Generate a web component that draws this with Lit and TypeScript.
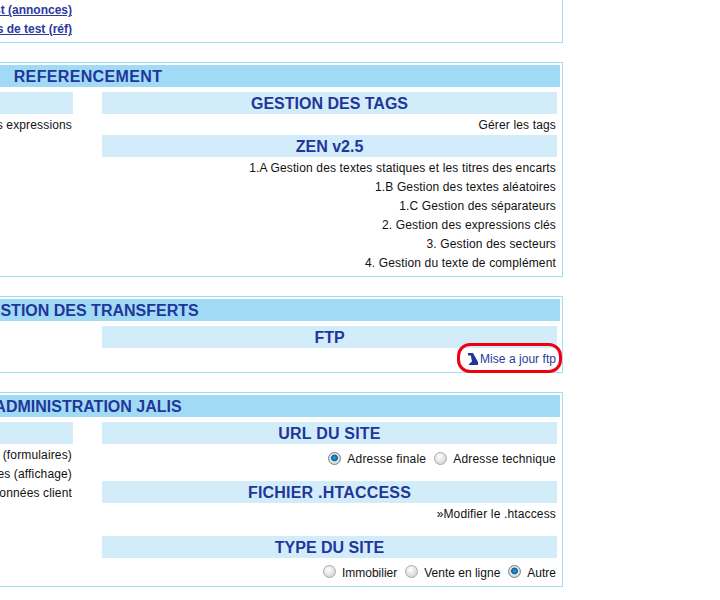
import { LitElement, html, css } from "lit";
import { customElement } from "lit/decorators.js";

@customElement("app-root")
export class AppRoot extends LitElement {
  static styles = css`
    :host { display: block; width: 720px; height: 600px; overflow: hidden; background: #fff; font-family: "Liberation Sans", Arial, sans-serif; font-size: 12px; color: #111; letter-spacing: 0.15px; }
    .page { width: 950px; margin-left: -387px; display: flex; flex-direction: column; gap: 19px; }
    .panel { border: 1px solid #a0dff0; padding: 2px 2px 3px; }
    .panel.first { border-top: none; padding: 0 2px 2px; }
    .bar { height: 22px; line-height: 24px; background: #a1daf5; color: #22369a; font-size: 16px; font-weight: bold; text-align: center; margin-bottom: 5px; letter-spacing: 0; }
    .bar.wide { letter-spacing: 0.35px; }
    .cols { display: grid; grid-template-columns: 454px 455px; column-gap: 29px; padding: 0 0 0 3px; }
    .col { display: flex; flex-direction: column; }
    .sub { height: 22px; line-height: 24px; background: #d3ecfa; color: #22369a; font-size: 16px; font-weight: bold; text-align: center; letter-spacing: 0; }
    .sub.wide { letter-spacing: 0.2px; }
    .sub.later { margin-top: 12px; }
    .rows { margin: 1px 0; }
    .row { height: 19px; line-height: 21px; text-align: right; padding-right: 1px; white-space: nowrap; }
    .row.link { font-weight: bold; color: #2b3a9b; text-decoration: underline; letter-spacing: 0; line-height: 19px; }
    .row.blue { color: #2b3a9b; display: flex; justify-content: flex-end; align-items: center; gap: 2px; box-sizing: border-box; padding-top: 2px; letter-spacing: 0.04px; }
    .radios { height: 37px; box-sizing: border-box; padding: 0 1px 7px 0; display: flex; justify-content: flex-end; align-items: center; gap: 8px; letter-spacing: 0.2px; }
    .radios.last { height: 25px; padding: 4px 1px 0 0; letter-spacing: 0; }
    .opt { display: flex; align-items: center; gap: 6px; }
    .r { width: 13px; height: 13px; border-radius: 50%; box-sizing: border-box; border: 1px solid #a9a9a9; background: radial-gradient(circle at 40% 35%, #fff, #cfcfcf 90%); margin-top: -2px; }
    .r.on { border-color: #76828e; background: radial-gradient(circle at 50% 45%, #38a6dc 0, #0a5f98 3px, #e6e6e6 3.8px, #c6c6c6); }
    .callout { position: absolute; left: 457px; top: 343px; width: 105px; height: 30px; box-sizing: border-box; border: 3px solid #ee0010; border-radius: 13px; pointer-events: none; }
    .wrap { position: relative; }
    .ico { display: block; margin-bottom: 2px; }
  `;

  private rows(items: string[], cls = "") {
    return html`<div class="rows">${items.map((t) => html`<div class="row ${cls}">${t}</div>`)}</div>`;
  }

  private radio(label: string, on = false) {
    return html`<span class="opt"><span class="r ${on ? "on" : ""}"></span>${label}</span>`;
  }

  render() {
    return html`
      <div class="wrap">
        <div class="page">
          <section class="panel first">
            <div class="cols">
              <div class="col">${this.rows(["Test (annonces)", "Pages de test (réf)"], "link")}</div>
              <div class="col"></div>
            </div>
          </section>
          <section class="panel">
            <div class="bar wide">REFERENCEMENT</div>
            <div class="cols">
              <div class="col">
                <div class="sub"></div>
                ${this.rows(["Gestion des expressions"])}
              </div>
              <div class="col">
                <div class="sub">GESTION DES TAGS</div>
                ${this.rows(["Gérer les tags"])}
                <div class="sub">ZEN v2.5</div>
                ${this.rows([
                  "1.A Gestion des textes statiques et les titres des encarts",
                  "1.B Gestion des textes aléatoires",
                  "1.C Gestion des séparateurs",
                  "2. Gestion des expressions clés",
                  "3. Gestion des secteurs",
                  "4. Gestion du texte de complément",
                ])}
              </div>
            </div>
          </section>
          <section class="panel">
            <div class="bar">GESTION DES TRANSFERTS</div>
            <div class="cols">
              <div class="col"></div>
              <div class="col">
                <div class="sub">FTP</div>
                <div class="rows">
                  <div class="row blue">
                    <svg class="ico" width="10" height="12" viewBox="0 0 10 12"><path d="M0 0h5l5 9v3H1v-1l3-2.5L2.8 2.5H0z" fill="#22369a"/></svg>
                    Mise a jour ftp
                  </div>
                </div>
              </div>
            </div>
          </section>
          <section class="panel">
            <div class="bar">ADMINISTRATION JALIS</div>
            <div class="cols">
              <div class="col">
                <div class="sub"></div>
                ${this.rows(["Gestion (formulaires)", "Gestion des textes (affichage)", "Données client"])}
              </div>
              <div class="col">
                <div class="sub wide">URL DU SITE</div>
                <div class="radios">${this.radio("Adresse finale", true)}${this.radio("Adresse technique")}</div>
                <div class="sub wide">FICHIER .HTACCESS</div>
                ${this.rows(["»Modifier le .htaccess"])}
                <div class="sub later">TYPE DU SITE</div>
                <div class="radios last">${this.radio("Immobilier")}${this.radio("Vente en ligne")}${this.radio("Autre", true)}</div>
              </div>
            </div>
          </section>
        </div>
        <div class="callout"></div>
      </div>
    `;
  }
}
